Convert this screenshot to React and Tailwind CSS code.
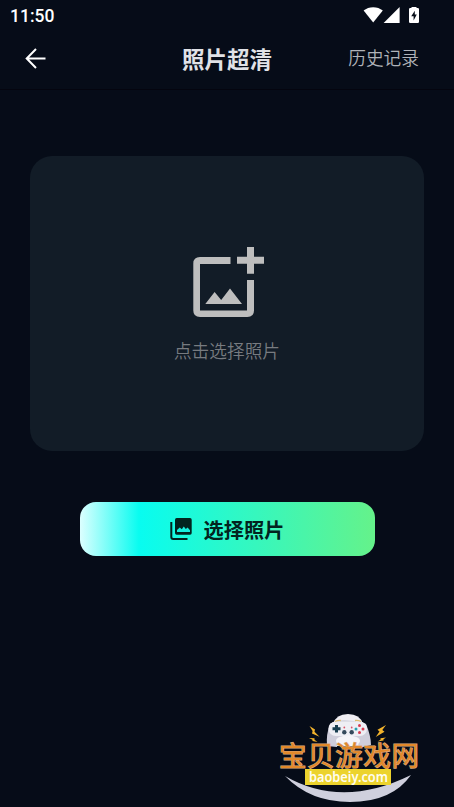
import React from 'react'

function StatusBar() {
  return (
    <div className="flex h-8 items-center justify-between pl-2.5 pr-[34px] text-white">
      <span className="font-['Roboto',sans-serif] text-[17.5px] font-medium leading-8">11:50</span>
      <svg className="h-[18px] w-[57px]" viewBox="0 0 57 18" fill="currentColor">
        <path d="M.6 3.6C5.8-1 14.6-1 19.8 3.6L10.2 15.4Z" />
        <path d="M36.600 0V16H20.600Z" />
        <path d="M48.500-.5h5v1.600h1.300q1.200 0 1.200 1.200v12.400q0 1.200-1.200 1.200h-7.600q-1.200 0-1.200-1.200V2.300q0-1.200 1.200-1.200h1.300Z" />
        <path d="M51.800 3.700l-3.600 5.500h2.400v4.300l3.200-5.900h-2Z" fill="#060d18" />
      </svg>
    </div>
  )
}

function Header() {
  return (
    <header className="grid h-[58px] grid-cols-[1fr_auto_1fr] items-center border-b border-[#04050f] pl-6 pr-[35px] pb-[6px]">
      <button aria-label="返回" className="h-6 w-6 text-white">
        <svg className="h-6 w-6" viewBox="0 0 24 24" fill="none" stroke="currentColor" strokeWidth="2">
          <path d="M21.500 12.500H3M12 3 2.700 12.500 12 22" />
        </svg>
      </button>
      <h1 className="-ml-[11px] translate-x-[11px] text-[22.5px] font-bold leading-8 text-[#e0e2e7]">照片超清</h1>
      <button className="mb-0.5 justify-self-end text-[17.7px] font-[350] leading-8 text-[#b0b3b9]">历史记录</button>
    </header>
  )
}

function AddPhotoIcon() {
  return (
    <svg className="ml-1 h-[71px] w-[72px]" viewBox="193 247 72 71" fill="#bebebe">
      <path d="M230.500 257H200Q193.300 257 193.300 263.500V310.500Q193.300 317 200 317H247.300Q254 317 254 310.500V280H247V310.500H200V264H230.500Z" />
      <path d="M247 247h7v9.800h10v7h-10v9.900h-7v-9.900h-10v-7h10Z" />
      <path d="M205.300 304 214.600 292 221.200 300 230 288.500 242 304Z" />
    </svg>
  )
}

function PhotosIcon() {
  return (
    <svg className="h-[22px] w-[22px]" viewBox="170 518 22 22">
      <path d="M176.700 518h13.300q1.700 0 1.700 1.700v13.300q0 1.700-1.700 1.700h-13.300q-1.700 0-1.700-1.700v-13.300q0-1.700 1.700-1.700Z" fill="#02241f" />
      <path d="M177 532v-2l2.800-2.500 2 1.800 2-2.800 2 2.600 1.800-1.600 2.400 2.700V532Z" fill="#17eedd" />
      <path d="M171.300 522v15q0 2 2 2H187.500" fill="none" stroke="#02241f" strokeWidth="2" />
    </svg>
  )
}

function Bolts() {
  return (
    <g fill="#f2b32c">
      <path d="M309.500 726l5.500 3.500-.5 2.300 5 5-7.500-3.200.6-2.500Z" />
      <path d="M309 738l5.500.3v1.500l3 2.200-5-1v-1.300Z" />
      <path d="M386 725l-8.500 4.700 2 1.800-3.800 5.500 8.800-5.200-2.200-1.800Z" />
      <path d="M386 737.500l-5.500.7v1.500l-3 1.900 6-1v-1.300Z" />
    </g>
  )
}

function Watermark() {
  return (
    <svg className="absolute bottom-0 left-[270px] h-[102px] w-[160px]" viewBox="270 705 160 102">
      <Bolts />
      <path d="M333 724Q336 714 348 714T363 724L367 746H329Z" fill="#f0eff4" />
      <path d="M330 724Q337 719.500 348 720.500T366 724Q371 736 371 745L359 748Q358 737 351 736H345Q338 737 337 747L327 746Q326 734 330 724Z" fill="#cfcedb" />
      <rect x="328.500" y="721.500" width="38.500" height="14.500" rx="7.200" fill="#eeeef4" />
      <ellipse cx="348" cy="741" rx="12" ry="5.500" fill="#f5f4f8" />
      <path d="M335 721.500q3-1.500 6-1M355 720.500q3-.5 6 1" fill="none" stroke="#dfbd72" strokeWidth="1.300" />
      <path d="M336.500 725v7.500M332.500 728.700h8" stroke="#183e50" strokeWidth="3" />
      <circle cx="344.300" cy="732.300" r="2.200" fill="#34495b" />
      <circle cx="351.700" cy="732.300" r="2.200" fill="#34495b" />
      <circle cx="344.300" cy="727.500" r=".9" fill="#d85367" />
      <circle cx="351.700" cy="727.500" r=".9" fill="#d85367" />
      <circle cx="359.500" cy="725.500" r="1.500" fill="#d83c50" />
      <circle cx="359.500" cy="732.500" r="1.500" fill="#d83c50" />
      <circle cx="356" cy="729" r="1.500" fill="#28a1b0" />
      <circle cx="363" cy="729" r="1.500" fill="#d83c50" />
      <path d="M285 776Q342 809 411 775Q392 802 350 802Q310 802 285 776Z" fill="#cfd0dd" />
      <text
        x="279" y="765.500" textLength="140"
        className="font-['Noto_Sans_CJK_SC',sans-serif] text-[27.500px] font-normal"
        fill="#e2892a" stroke="#d9a87c" strokeWidth="1.200" paintOrder="stroke"
      >
        宝贝游戏网
      </text>
      <rect x="305" y="769" width="86" height="16" fill="#ecd32d" />
      <text
        x="309" y="781.800" textLength="79" lengthAdjust="spacingAndGlyphs"
        className="font-['Noto_Sans',sans-serif] text-[14px] font-semibold" fill="#fffdf0"
      >
        baobeiy.com
      </text>
    </svg>
  )
}

export default function App() {
  return (
    <div className="relative flex h-[807px] w-[454px] flex-col overflow-hidden bg-[#060c18] font-['Noto_Sans_CJK_SC',sans-serif]">
      <StatusBar />
      <Header />
      <main className="flex flex-col items-center pt-[66px]">
        <button className="flex h-[295px] w-[394px] flex-col items-center rounded-[22px] bg-[#121c27] pt-[91px]">
          <AddPhotoIcon />
          <span className="mt-4 text-[17.7px] font-[350] leading-8 text-[#777b80]">点击选择照片</span>
        </button>
        <button className="mt-[51px] flex h-[54px] w-[295px] items-center justify-center gap-3 rounded-2xl bg-[linear-gradient(90deg,#dcffff_0%,#08fcf0_20%,#65f28a_100%)] text-[20.2px] font-bold text-[#02241f]">
          <PhotosIcon />
          <span className="translate-y-px">选择照片</span>
        </button>
      </main>
      <Watermark />
    </div>
  )
}
